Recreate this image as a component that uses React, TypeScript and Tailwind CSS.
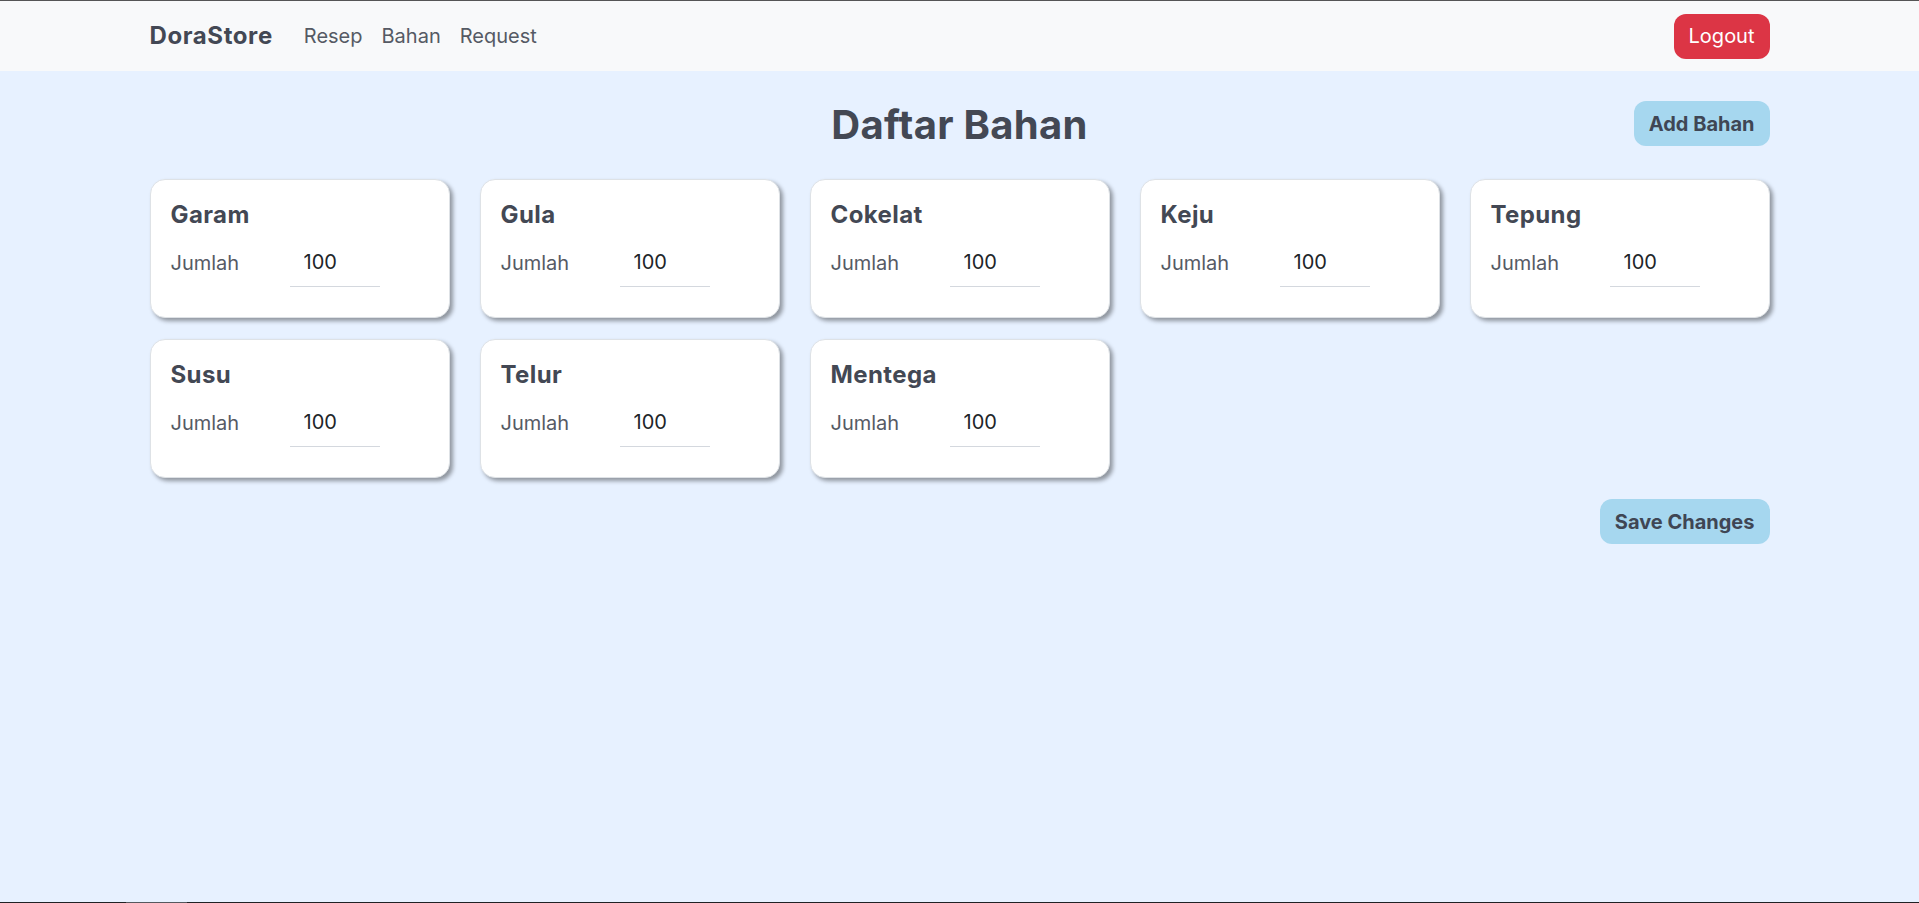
import { useState } from 'react';

const BAHAN = ['Garam', 'Gula', 'Cokelat', 'Keju', 'Tepung', 'Susu', 'Telur', 'Mentega'];

function BahanCard({ name }: { name: string }) {
  const [jumlah, setJumlah] = useState('100');
  return (
    <div className="bg-white border border-[#dee2e6] rounded-[15px] p-5 shadow-[3px_3px_4px_rgba(0,0,0,0.38)]">
      <h3 className="text-[24px] leading-[29px] font-bold tracking-[0.4px] text-[#434854] mb-[12px]">{name}</h3>
      <div className="flex items-start mb-[10px]">
        <span className="w-[119px] mt-[7px] text-[20px] leading-[30px] text-[#555a64]">Jumlah</span>
        <input
          value={jumlah}
          onChange={(e) => setJumlah(e.target.value)}
          className="w-[90px] h-[46px] pl-[14px] pb-[4px] text-[20px] leading-[30px] text-[#212529] bg-transparent border-b border-[#d4d8de] outline-none"
        />
      </div>
    </div>
  );
}

export default function App() {
  return (
    <div className="min-h-screen flex flex-col bg-[#e7f1ff] font-['Inter',sans-serif]">
      {/* Navbar */}
      <nav className="h-[71px] border-t border-[#555] bg-[#f8f9fa]">
        <div className="w-[1620px] mx-auto h-full flex items-center">
          <span className="text-[24px] font-bold tracking-[0.6px] text-[#434854] mr-[31px]">DoraStore</span>
          <div className="flex items-center gap-[19px] text-[20px] text-[#555a64]">
            <a>Resep</a>
            <a>Bahan</a>
            <a>Request</a>
          </div>
          <button className="ml-auto h-[45px] px-[15px] rounded-[12px] bg-[#dc3545] text-white text-[20px]">
            Logout
          </button>
        </div>
      </nav>

      {/* Content */}
      <main className="flex-1 w-[1620px] mx-auto pt-[30px]">
        <div className="relative flex justify-center items-start h-[48px] mb-[30px]">
          <h1 className="text-[40px] leading-[48px] font-bold tracking-[0.3px] text-[#434854]">Daftar Bahan</h1>
          <button className="absolute right-0 top-0 h-[45px] px-[15px] rounded-[12px] bg-[#a6d7ef] text-[#3f4654] text-[20px] font-bold">
            Add Bahan
          </button>
        </div>

        <div className="grid grid-cols-5 gap-x-[30px] gap-y-[21px]">
          {BAHAN.map((b) => (
            <BahanCard key={b} name={b} />
          ))}
        </div>

        <div className="flex justify-end mt-[21px]">
          <button className="h-[45px] px-[15px] rounded-[12px] bg-[#a6d7ef] text-[#3f4654] text-[20px] font-bold">
            Save Changes
          </button>
        </div>
      </main>

      <div className="flex h-px bg-[#202124]">
        <div className="ml-[126px] w-[61px] bg-[#55585e]" />
      </div>
    </div>
  );
}
